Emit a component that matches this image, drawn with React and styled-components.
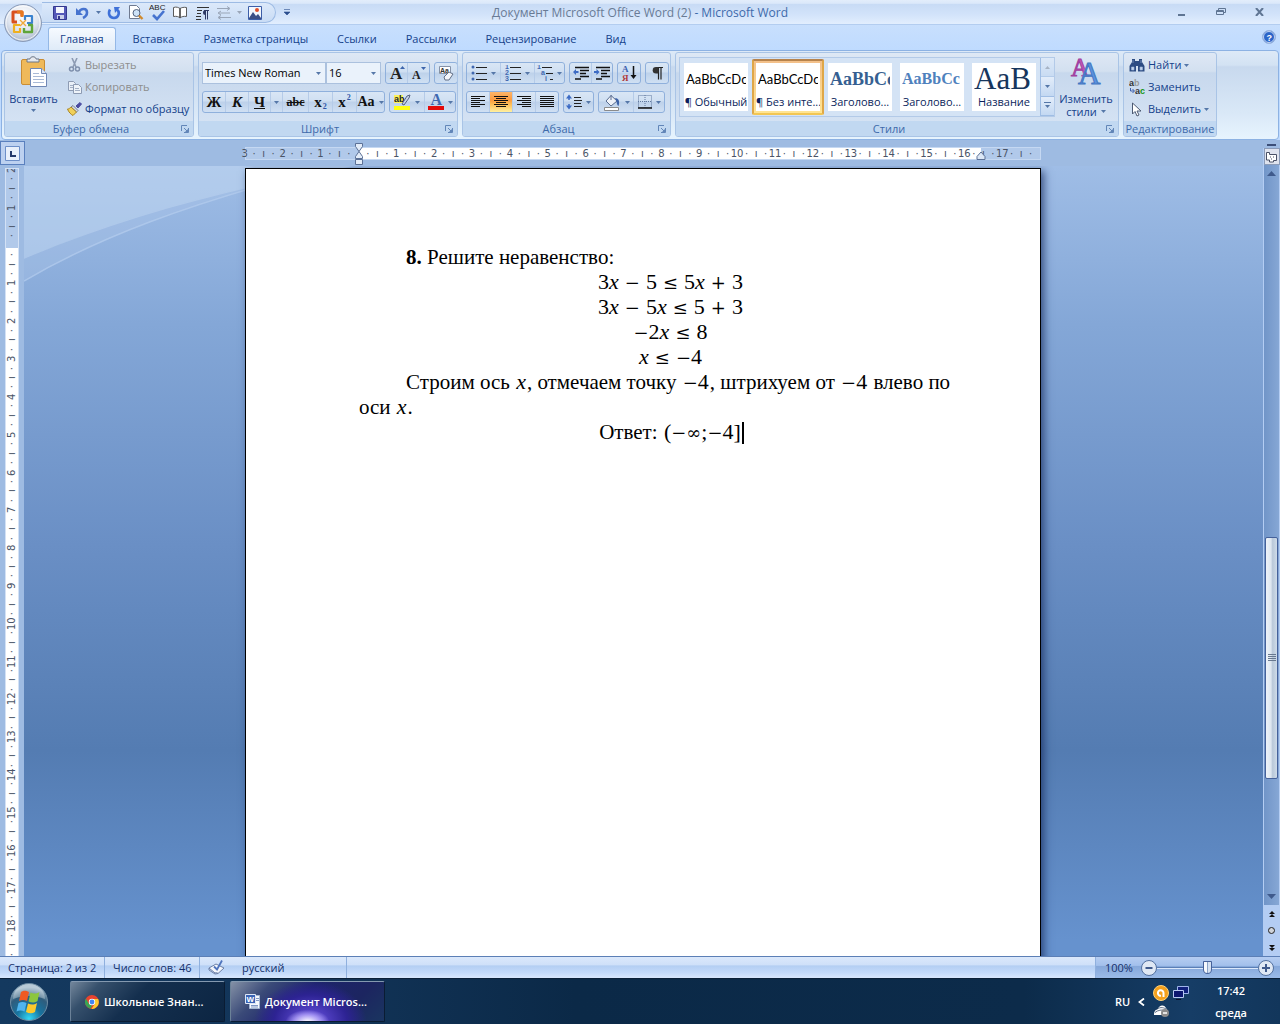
import React from 'react'
import styled, { createGlobalStyle, css } from 'styled-components'

const GlobalStyle = createGlobalStyle`
*{
    box-sizing:border-box;
}
body{
    margin:0;
    font-family:"Open Sans","Noto Sans",sans-serif;
    font-size:11px;
    line-height:16px;
    color:#15428b;
}
button,select,input{
    font:inherit;
    color:inherit;
    margin:0;
    padding:0;
    border:0;
    background:none;
}
svg{
    display:block;
    flex:none;
}
`

const Window = styled.div`
height:100vh;
display:flex;
flex-direction:column;
overflow:hidden;
background-color:#bfdbff;
`

/* title bar */
const TitleBar = styled.header`
height:25px;
display:grid;
grid-template-columns:1fr auto 1fr;
align-items:center;
position:relative;
background:linear-gradient(#e3edfb 0,#dbe8fa 14%,#c8dbf5 18%,#d2e3fa 60%,#e2eefe 100%);
border-bottom:1px solid #b3cdf0;
`
const Orb = styled.button`
position:absolute;
left:3px;
top:3px;
z-index:2;
`
const QuickAccess = styled.div`
display:flex;
align-items:center;
padding-top:1px;
`
const QuickPill = styled.div`
height:21px;
margin-left:42px;
padding:0 8px 0 7px;
display:flex;
align-items:center;
border:1px solid #9dbbe4;
border-left:0;
border-radius:0 11px 11px 0;
background:linear-gradient(#dce9fa,#c9dcf5);
`
const QuickButton = styled.button`
width:${(props) => props.$w || 22}px;
height:19px;
display:flex;
align-items:center;
justify-content:center;
`
const Title = styled.h1`
margin:0;
padding-top:2px;
font-size:12px;
font-weight:400;
color:#3e6aaa;
white-space:pre;
`
const DocName = styled.span`
color:#697b95;
`
const WindowButtons = styled.div`
display:flex;
justify-content:flex-end;
padding-right:1px;
`
const WindowButton = styled.button`
width:39px;
height:22px;
display:flex;
align-items:center;
justify-content:center;
`

/* tabs */
const TabRow = styled.nav`
height:25px;
display:flex;
align-items:flex-end;
gap:5px;
padding:0 4px 0 48px;
background:linear-gradient(#c8dffd,#bfdbff);
`
const Tab = styled.button`
height:23px;
padding:0 12px;
border-radius:3px 3px 0 0;
${(props) => props.$active && css`
    border:1px solid #94b8e6;
    border-bottom:0;
    padding:0 11px;
    background:linear-gradient(#f6faff,#dfebf8);
`}
`
const Help = styled.button`
margin:0 0 6px auto;
`

/* ribbon */
const Ribbon = styled.section`
height:90px;
display:flex;
gap:4px;
padding:1px 2px 3px;
margin:0 1px;
border:1px solid #8db2e3;
border-radius:4px;
background:linear-gradient(#dde9f7 0,#d3e2f3 16%,#c8d9ee 18%,#d9e8f7 70%,#e7f4fe 100%);
`
const GroupBox = styled.div`
width:${(props) => props.$w}px;
height:85px;
flex:none;
display:flex;
flex-direction:column;
border:1px solid #a9c4e6;
border-radius:3px;
background:linear-gradient(#dee8f5 0,#d3e0f0 22%,#c7d8ed 24%,#d8e5f5 100%);
overflow:hidden;
`
const GroupBody = styled.div`
flex:1;
display:flex;
`
const GroupLabel = styled.div`
height:15px;
display:flex;
align-items:center;
background-color:#c1d8f1;
color:#3e6aaa;
line-height:15px;
`
const LabelText = styled.span`
flex:1;
text-align:center;
white-space:nowrap;
`
const Launcher = styled.button`
width:16px;
height:15px;
display:flex;
align-items:center;
justify-content:center;
`
const BigButton = styled.button`
width:${(props) => props.$w}px;
display:flex;
flex-direction:column;
align-items:center;
padding-top:3px;
line-height:13px;
white-space:nowrap;
`
const BigText = styled.span`
display:flex;
align-items:center;
gap:4px;
margin-top:${(props) => props.$top || 0}px;
`
const SmallList = styled.div`
display:flex;
flex-direction:column;
padding:1px 0 0 5px;
`
const SmallButton = styled.button`
height:22px;
display:flex;
align-items:center;
gap:3px;
white-space:nowrap;
color:${(props) => (props.$off ? '#8d8d8d' : '#15428b')};
`
const Rows = styled.div`
display:flex;
flex-direction:column;
gap:7px;
padding:9px 3px 0;
`
const Row = styled.div`
display:flex;
gap:4px;
`
const Combo = styled.label`
width:${(props) => props.$w}px;
height:22px;
display:flex;
align-items:center;
padding-right:4px;
margin-right:${(props) => (props.$joined ? -4 : 0)}px;
border:1px solid #abc1de;
background-color:#eaf2fb;
`
const ComboSelect = styled.select`
flex:1;
min-width:0;
height:20px;
padding-left:2px;
appearance:none;
color:#000;
outline:0;
`
const Cluster = styled.div`
height:22px;
display:flex;
border:1px solid #8fb0dc;
border-radius:3px;
background:linear-gradient(#d9e6f5 0,#cfdff2 45%,#bdd1ea 50%,#d0e0f3 100%);
overflow:hidden;
`
const Tool = styled.button`
width:${(props) => props.$w || 22}px;
height:20px;
display:flex;
align-items:center;
justify-content:center;
gap:4px;
font-family:"Liberation Serif",serif;
font-weight:700;
font-size:${(props) => props.$size || 15}px;
font-style:${(props) => (props.$italic ? 'italic' : 'normal')};
text-decoration:${(props) => props.$line || 'none'};
color:#111;

& + &{
    border-left:1px solid #b5cbe8;
}
${(props) => props.$active && css`
    background:linear-gradient(#fdb569 0,#fb9b3f 40%,#fdbc55 60%,#fff0a0 100%);
`}
`
const Index = styled.span`
align-self:${(props) => (props.$sub ? 'flex-end' : 'flex-start')};
margin-left:-3px;
font-size:8px;
line-height:11px;
color:#2f56a8;
`
const Gallery = styled.div`
display:flex;
height:60px;
margin:4px 0 0 3px;
border:1px solid #b3cae8;
background-color:#d4e3f5;
`
const StyleCard = styled.button`
width:72px;
height:56px;
margin-top:1px;
padding:3px;
border:1px solid transparent;
border-radius:2px;
${(props) => props.$active && css`
    border:2px solid #c2935a;
    border-color:#b7834c #dfa748 #f2c654;
    padding:2px;
    background:linear-gradient(#f3c08a,#ffe593);
`}
`
const CardFace = styled.span`
height:48px;
display:flex;
flex-direction:column;
background-color:#fff;
overflow:hidden;
color:#0b1f5c;
`
const Sample = styled.span`
height:31px;
margin:0 2px;
display:flex;
align-items:center;
font-family:${(props) => props.$font || '"Lato",sans-serif'};
font-size:${(props) => props.$size || 13}px;
font-weight:${(props) => props.$weight || 400};
color:${(props) => props.$color || '#000'};
white-space:nowrap;
overflow:hidden;
`
const CardName = styled.span`
text-align:center;
line-height:16px;
white-space:nowrap;
`
const GalleryScroll = styled.div`
width:14px;
display:flex;
flex-direction:column;
border-left:1px solid #9fbde4;
`
const GalleryArrow = styled.button`
flex:1;
display:flex;
align-items:center;
justify-content:center;
border-bottom:1px solid #9fbde4;
background:linear-gradient(#e3edfa,#c3d8f2);
opacity:${(props) => (props.$off ? 0.6 : 1)};
`

/* workspace */
const Workspace = styled.main`
flex:1;
min-height:0;
display:flex;
`
const Desk = styled.div`
flex:1;
min-width:0;
display:flex;
flex-direction:column;
`
const RulerRow = styled.div`
height:26px;
flex:none;
display:flex;
background-color:#9ebbe2;
`
const TabSelector = styled.button`
width:25px;
height:24px;
margin-top:1px;
border:1px solid #5a80be;
background-color:#bdd1f0;
display:flex;
align-items:center;
justify-content:center;
`
const RulerArea = styled.div`
flex:1;
display:flex;
justify-content:center;
padding-right:2px;
`
const HRuler = styled.div`
position:relative;
width:796px;
height:13px;
margin-top:7px;
border:1px solid #c5d8f2;
background:linear-gradient(90deg,#b1c9ea 14.2%,#fff 14.2%,#fff 92.6%,#b1c9ea 92.6%);
`
const HMarks = styled.div`
display:flex;
margin:0 5px 0 -6px;
height:11px;
`
const Mark = styled.span`
flex:1 1 0;
min-width:0;
min-height:0;
display:flex;
align-items:center;
justify-content:center;
font-family:"DejaVu Sans",sans-serif;
font-size:10px;
line-height:10px;
color:#4a5467;
transform:${(props) => (props.$turn ? 'rotate(-90deg)' : 'none')};
`
const Marker = styled.svg`
position:absolute;
left:${(props) => props.$at}%;
top:${(props) => props.$top}px;
margin-left:-5px;
`
const Body = styled.div`
flex:1;
min-height:0;
display:flex;
`
const VRulerColumn = styled.div`
width:24px;
flex:none;
padding:2px 5px 0;
background-color:#9ebbe2;
overflow:hidden;
`
const VRuler = styled.div`
height:794px;
border:solid #d3e1f5;
border-width:1px 1px 0;
background:linear-gradient(#b1c9ea 79px,#fff 79px);
overflow:hidden;
`
const VMarks = styled.div`
height:794px;
margin-top:-4px;
display:flex;
flex-direction:column;
`
const Canvas = styled.div`
flex:1;
position:relative;
display:flex;
justify-content:center;
padding:2px 1px 0 0;
background:linear-gradient(#9fbde6 0,#84a7d7 20%,#6a8fc5 48%,#547cb2 74%,#6692ce 98%);
overflow:hidden;
`
const Swoosh = styled.svg`
position:absolute;
left:0;
top:0;
`
const Page = styled.article`
position:relative;
width:796px;
height:1123px;
padding:76px 58px 0 113px;
border:1px solid #000;
background-color:#fff;
box-shadow:3px 3px 8px rgba(20,40,90,0.7);
color:#000;
font-family:"Liberation Serif",serif;
font-size:21px;
line-height:25px;
`
const Paragraph = styled.p`
margin:0;
height:${(props) => (props.$center ? '25px' : 'auto')};
text-indent:${(props) => (props.$center ? 0 : 47)}px;
text-align:${(props) => (props.$center ? 'center' : 'left')};
`
const Formula = styled.span`
margin:0 1px;
font-size:22px;
line-height:20px;
white-space:nowrap;
`
const Sign = styled.span`
margin:0 ${(props) => (props.$tight ? 0 : 6)}px;
font-family:"DejaVu Serif",serif;
font-size:18px;
`
const Caret = styled.span`
display:inline-block;
width:2px;
height:22px;
margin-right:-2px;
vertical-align:-5px;
background-color:#000;
`

/* scroll bar */
const ScrollColumn = styled.div`
width:17px;
flex:none;
display:flex;
flex-direction:column;
align-items:center;
background-color:#b4cdf3;
`
const SplitBar = styled.div`
width:100%;
height:8px;
padding:4px 4px 2px;
background-color:#9ebbe2;
`
const SplitHandle = styled.div`
height:2px;
background-color:#3c4f78;
`
const RulerToggle = styled.button`
width:16px;
height:17px;
border:1px solid #8c9cb8;
background-color:#dfe3ee;
display:flex;
align-items:center;
justify-content:center;
`
const Track = styled.div`
flex:1;
width:15px;
display:flex;
flex-direction:column;
background:linear-gradient(90deg,#7195c8,#86a7d5);
`
const ScrollButton = styled.button`
height:16px;
display:flex;
align-items:center;
justify-content:center;
`
const Space = styled.div`
flex:${(props) => props.$grow};
`
const Thumb = styled.div`
flex:241;
display:flex;
align-items:center;
justify-content:center;
margin:0 1px;
border:1px solid #45619a;
border-radius:2px;
background:linear-gradient(90deg,#eef3f9 0,#dde6f0 45%,#b9c8d9 60%,#cfdce9 100%);
`
const Browse = styled.div`
height:51px;
display:flex;
flex-direction:column;
`
const BrowseButton = styled.button`
width:15px;
height:17px;
display:flex;
align-items:center;
justify-content:center;
`

/* status bar */
const StatusBar = styled.footer`
height:22px;
flex:none;
display:flex;
border-top:1px solid #5c7fb6;
background:linear-gradient(#dbe8fb 0,#cfe0f9 38%,#b3cef3 42%,#c3dafa 75%,#d8e7fd 100%);
color:#15306b;
`
const StatusItem = styled.div`
width:${(props) => props.$w}px;
padding-left:8px;
display:flex;
align-items:center;
gap:16px;
border-right:1px solid #8fb0de;
`
const Zoom = styled.div`
width:185px;
margin-left:auto;
padding:0 6px 0 9px;
display:flex;
align-items:center;
border-left:1px solid #8fb0de;
background:linear-gradient(#b5cdf1 0,#a3c0ec 40%,#86a8da 45%,#9bbbe8 100%);
`
const ZoomValue = styled.button`
width:36px;
text-align:left;
`
const ZoomRange = styled.input`
flex:1;
min-width:0;
height:16px;
appearance:none;
background:linear-gradient(transparent 7px,#5b7fb6 7px,#5b7fb6 8px,#dbe8fb 8px,#dbe8fb 9px,transparent 9px);

&::-webkit-slider-thumb{
    appearance:none;
    width:9px;
    height:13px;
    border:1px solid #45619a;
    border-radius:1px 1px 5px 5px;
    background:linear-gradient(90deg,#f6f9fd 3px,#8ba4c8 3px,#8ba4c8 4px,#d5e1f1 4px);
}
`

/* taskbar */
const Taskbar = styled.footer`
height:46px;
flex:none;
display:flex;
align-items:center;
background:linear-gradient(90deg,#14395f 0,#123458 25%,#0b2947 45%,#0c2b4a 80%,#163d66 93%,#12365b 100%);
border-top:1px solid #0a2038;
color:#fff;
font-weight:600;
`
const Start = styled.button`
margin-left:9px;
`
const TaskButton = styled.button`
width:155px;
height:41px;
margin-left:${(props) => props.$gap}px;
padding-left:14px;
display:flex;
align-items:center;
gap:5px;
white-space:nowrap;
border:1px solid #0a1c33;
border-top-color:#8499b0;
border-left-color:#6b8198;
border-radius:2px;
background:linear-gradient(135deg,#73869b 0,#36506c 16%,#142f4e 42%,#0c2542 100%);
${(props) => props.$active && css`
    background:radial-gradient(ellipse 22px 12px at 50% 102%,#fff,rgba(190,175,255,0.7) 60%,transparent),
        radial-gradient(ellipse 56px 40px at 52% 100%,#6c55e6,#2d2393 65%,transparent),
        linear-gradient(135deg,#8491a6 0,#3a4a78 22%,#1d246b 45%,#1c2560 75%,#1a3560 100%);
`}
`
const Tray = styled.div`
margin-left:auto;
display:flex;
align-items:center;
gap:8px;
padding-right:33px;
`
const TrayIcons = styled.div`
display:grid;
grid-template-columns:17px 17px;
gap:2px;
margin:0 18px 2px 0;
`
const Clock = styled.time`
display:flex;
flex-direction:column;
align-items:center;
gap:6px;
`

const Arrow = ({ up, color = '#5577a8' }) => (
    <svg width="5" height="3" viewBox="0 0 5 3">
        <path d={up ? 'M0 3h5L2.5 0z' : 'M0 0h5L2.5 3z'} fill={color} />
    </svg>
)

const Lines = ({ short }) => (
    <svg width="16" height="14" viewBox="0 0 16 14">
        {[1, 3, 5, 7, 9, 11].map((y, i) => (
            <path key={y} d={`M${i % 2 ? short[0] : 1} ${y}.5H${i % 2 ? short[1] : 15}`} stroke="#111" />
        ))}
    </svg>
)

const OrbIcon = () => (
    <svg width="40" height="40" viewBox="0 0 40 40">
        <defs>
            <radialGradient id="orb" cx="50%" cy="30%" r="70%">
                <stop offset="0" stopColor="#fff" />
                <stop offset="0.6" stopColor="#dfe5ef" />
                <stop offset="1" stopColor="#a9b6cc" />
            </radialGradient>
        </defs>
        <circle cx="20" cy="20" r="18.5" fill="url(#orb)" stroke="#8a9bb8" />
        <circle cx="20" cy="20" r="17" fill="none" stroke="#fff" strokeOpacity="0.8" />
        <g fill="none" strokeLinejoin="round">
            <path d="M14 19h-4V9h9v4" stroke="#d9501e" strokeWidth="3" />
            <path d="M14 9h5v5" stroke="#e8791f" strokeWidth="3" />
            <path d="M22 17v-4h7v7h-5" stroke="#3b83cf" strokeWidth="2.2" />
            <path d="M17 22h-6v7h6v-4" stroke="#efb01f" strokeWidth="2.2" />
            <path d="M21 25v4h8v-7h-4" stroke="#5fa53a" strokeWidth="2.4" />
            <path d="M17 17l6 6M23 17l-6 6" stroke="#f0a83a" strokeWidth="1.4" />
        </g>
    </svg>
)

const SaveIcon = () => (
    <svg width="14" height="14" viewBox="0 0 14 14">
        <path d="M.5.5h13v13h-12l-1-1z" fill="#5458b8" stroke="#34388f" />
        <path d="M3 1h8v6H3z" fill="#f4f6fd" />
        <path d="M4 9h7v4H4z" fill="#c9cfea" />
        <path d="M5 10h2v3H5z" fill="#34388f" />
    </svg>
)
const UndoIcon = () => (
    <svg width="14" height="14" viewBox="0 0 14 14">
        <path d="M4 6c2-4 8-4 8 .5 0 3-2 4.5-4 5.5" fill="none" stroke="#4673cf" strokeWidth="2.6" />
        <path d="M1 2v7h7z" fill="#4673cf" />
    </svg>
)
const RedoIcon = () => (
    <svg width="14" height="14" viewBox="0 0 14 14">
        <path d="M3 3.5C1 7 2 12 7 12s6-6 3-8.500" fill="none" stroke="#3f71d8" strokeWidth="2.6" />
        <path d="M7 1h6L8 7z" fill="#3f71d8" />
    </svg>
)
const PreviewIcon = () => (
    <svg width="16" height="15" viewBox="0 0 16 15">
        <path d="M1.5.5h7l3 3v10h-10z" fill="#fff" stroke="#6f7a90" />
        <circle cx="8.5" cy="8" r="3.5" fill="#cfe3f7" stroke="#566580" />
        <path d="M11 10.500l3.5 3.5" stroke="#d08a2d" strokeWidth="2.4" />
    </svg>
)
const SpellIcon = () => (
    <svg width="18" height="18" viewBox="0 0 18 18">
        <text x="0" y="6" fontSize="8" fontFamily="Liberation Sans" fill="#222">ABC</text>
        <path d="M4 11l4 4 7-8" fill="none" stroke="#4673cf" strokeWidth="2.6" />
    </svg>
)
const BookIcon = () => (
    <svg width="16" height="13" viewBox="0 0 16 13">
        <path d="M1.5 1.5c3-1 5 0 6.5 1 1.5-1 4-1.500 6.5-1v9c-2.500-.5-5 0-6.5 1.5-1.500-1.500-3.500-2-6.5-1.500z" fill="#fff" stroke="#5a5a5a" />
        <path d="M8 2.5v9" stroke="#333" strokeWidth="1.5" />
    </svg>
)
const ParaMarksIcon = () => (
    <svg width="15" height="14" viewBox="0 0 15 14">
        <path d="M2 1.5h12M2 4.5h5M2 7.5h4M1 10.5h5M1 13.5h5" stroke="#333" />
        <path d="M9 4.5h5M10.5 4.5v9M12.5 4.5v9" stroke="#2f3a66" />
        <path d="M10.5 4a2.5 2.5 0 000 5z" fill="#2f3a66" />
    </svg>
)
const ArrowsIcon = () => (
    <svg width="16" height="14" viewBox="0 0 16 14">
        <path d="M1 2.5h12M3 7h11M3 11.5h12M11 .5l3 2-3 2M5 5L2 7l3 2M5 9.5l-3 2 3 2" fill="none" stroke="#9aa6b8" />
    </svg>
)
const PictureIcon = () => (
    <svg width="14" height="14" viewBox="0 0 14 14">
        <path d="M.5.5h13v13H.5z" fill="#f3f7fd" stroke="#3d5ea8" />
        <path d="M1 12l4-6 3 4 2-2 3 4v1H1z" fill="#3b4f86" />
        <circle cx="9" cy="4" r="2" fill="#e0502c" />
    </svg>
)
const HelpIcon = () => (
    <svg width="14" height="14" viewBox="0 0 14 14">
        <circle cx="7" cy="7" r="6.5" fill="#2c66c9" stroke="#9db7de" />
        <circle cx="7" cy="7" r="5.5" fill="none" stroke="#fff" strokeOpacity="0.7" />
        <text x="4.5" y="10.5" fontSize="9" fontWeight="700" fontFamily="Liberation Sans" fill="#fff">?</text>
    </svg>
)
const LauncherIcon = () => (
    <svg width="8" height="8" viewBox="0 0 8 8">
        <path d="M.5 6V.5H6M3 3l3 3M7.5 3v4.5H3" fill="none" stroke="#6286b8" />
        <path d="M7 4v3H4z" fill="#6286b8" />
    </svg>
)
const PasteIcon = () => (
    <svg width="28" height="32" viewBox="0 0 28 32">
        <rect x="1.5" y="3.5" width="23" height="25" rx="1.5" fill="#efb95a" stroke="#c98d35" />
        <path d="M7 6V3h3c0-3 6-3 6 0h3v3z" fill="#e6e9ee" stroke="#6d7686" />
        <path d="M10.5 12.5h11l5 5v13h-16z" fill="#fff" stroke="#7088b5" />
        <path d="M21.5 12.5v5h5" fill="#dbe5f5" stroke="#7088b5" />
        <path d="M13 17.5h6M13 20.5h11M13 23.5h11M13 26.5h11" stroke="#a9bad6" />
    </svg>
)
const CutIcon = () => (
    <svg width="15" height="14" viewBox="0 0 15 14">
        <path d="M5 0l4 9M10 0L6 9" stroke="#8d9bb3" strokeWidth="1.6" />
        <circle cx="4.5" cy="11" r="2" fill="none" stroke="#7f90ad" strokeWidth="1.5" />
        <circle cx="10.5" cy="11" r="2" fill="none" stroke="#7f90ad" strokeWidth="1.5" />
    </svg>
)
const CopyIcon = () => (
    <svg width="15" height="13" viewBox="0 0 15 13">
        <path d="M1.5.5h5l2 2v7h-7z" fill="#e9eff7" stroke="#8d9bb3" />
        <path d="M3 4.5h4M3 6.5h4" stroke="#a3b0c5" />
        <path d="M6.5 3.5h5l3 3v6h-8z" fill="#eef3f9" stroke="#8d9bb3" />
        <path d="M8 7.5h4M8 9.5h5" stroke="#a3b0c5" />
    </svg>
)
const BrushIcon = () => (
    <svg width="15" height="14" viewBox="0 0 15 14">
        <path d="M9 4l4-3.5 1.5 1.5L11 6z" fill="#4b4ba0" stroke="#4b4ba0" />
        <path d="M6 3.5l5 5-1.5 1.5L4 5z" fill="#d7dce6" stroke="#777f90" />
        <path d="M4 5l5.5 5L6 13.5c-2-1-4.5-3.5-5.5-6.5C2 7 3 6 4 5z" fill="#f0d05a" stroke="#a98525" />
    </svg>
)
const EraserIcon = () => (
    <svg width="18" height="18" viewBox="0 0 18 18">
        <path d="M2.5 2.5h11v7h-11z" fill="#fff" stroke="#8592a8" />
        <text x="3" y="8.5" fontSize="7" fontWeight="700" fontFamily="Liberation Sans" fill="#333">Aa</text>
        <path d="M7 13l5-5 4 2-4 6H8z" fill="#f3f5fa" stroke="#626f86" />
    </svg>
)
const HighlightIcon = () => (
    <svg width="17" height="18" viewBox="0 0 17 18">
        <path d="M0 2h9v8H0z" fill="#fbf35a" />
        <text x="0" y="9" fontSize="9" fontFamily="Liberation Sans" fill="#222">ab</text>
        <path d="M8 11l5-8 3-1-1 3-5 7z" fill="#c5d2ea" stroke="#55627f" />
        <path d="M0 13h16v4H0z" fill="#ffff14" />
    </svg>
)
const FontColorIcon = () => (
    <svg width="16" height="18" viewBox="0 0 16 18">
        <text x="2.5" y="12" fontSize="16" fontWeight="700" fontFamily="Liberation Serif" fill="#3f68b0">A</text>
        <path d="M0 13h16v4H0z" fill="#e30b0b" />
    </svg>
)
const SizeIcon = ({ small }) => (
    <svg width="18" height="20" viewBox="0 0 18 20">
        <text x="2" y="16" fontSize={small ? 12 : 17} fontWeight="700" fontFamily="Liberation Serif" fill="#222">A</text>
        <path d={small ? 'M11 4h5l-2.5 3z' : 'M12 6h5l-2.5-3z'} fill="#3d65ab" />
    </svg>
)
const ListIcon = ({ marks }) => (
    <svg width="16" height="16" viewBox="0 0 16 16">
        {[2, 8, 14].map((y, i) => (
            <g key={y}>
                {marks === 'dot'
                    ? <circle cx="2" cy={y} r="1.5" fill="#4168b0" />
                    : <text x={marks === 'multi' ? i * 4 : 0} y={y + 2} fontSize="7" fontWeight="700" fontFamily="Liberation Sans" fill="#4168b0">{marks === 'multi' ? '1ai'[i] : i + 1}</text>}
                <path d={`M${marks === 'multi' ? 5 + i * 4 : 5} ${y}.5h${marks === 'multi' ? 10 - i * 3 : 11}`} stroke="#222" />
            </g>
        ))}
    </svg>
)
const IndentIcon = ({ right }) => (
    <svg width="16" height="14" viewBox="0 0 16 14">
        <path d="M2 1.5h14M7 4.5h9M7 7.5h6M7 10.5h9M2 13h6" stroke="#111" strokeWidth="1.5" />
        <path d={right ? 'M5.5 6l-3-3v2H0v2h2.5v2z' : 'M0 6l3-3v2h2.5v2H3v2z'} fill="#3c6bc4" />
    </svg>
)
const SortIcon = () => (
    <svg width="16" height="18" viewBox="0 0 16 18">
        <text x="1" y="8" fontSize="9" fontWeight="700" fontFamily="Liberation Serif" fill="#3c5fae">А</text>
        <text x="1" y="17" fontSize="9" fontWeight="700" fontFamily="Liberation Serif" fill="#b03a3a">Я</text>
        <path d="M12.5 2v11" stroke="#111" strokeWidth="1.5" />
        <path d="M9.5 11h6l-3 4z" fill="#111" />
    </svg>
)
const PilcrowIcon = () => (
    <svg width="11" height="13" viewBox="0 0 11 13">
        <path d="M5 .5h6M6.5 1v11.5M9 1v11.5" stroke="#222" strokeWidth="1.2" />
        <path d="M6.5 0H4a3.3 3.3 0 000 6.6h2.5z" fill="#333" />
    </svg>
)
const SpacingIcon = () => (
    <svg width="16" height="16" viewBox="0 0 16 16">
        <path d="M3 2v4M3 10v4" stroke="#3c6bc4" strokeWidth="1.5" />
        <path d="M0 4.5l3-4 3 4zM0 11.5l3 4 3-4z" fill="#3c6bc4" />
        <path d="M8 3.5h7M8 6.5h8M8 9.5h7M8 12.5h8" stroke="#222" />
    </svg>
)
const BucketIcon = () => (
    <svg width="18" height="17" viewBox="0 0 18 17">
        <path d="M8 1.5L14 7l-6 5-5-5z" fill="#eef2f9" stroke="#586b8e" />
        <path d="M8 1v5" stroke="#586b8e" />
        <path d="M12 4c4 0 5 4 3.5 8-2-1-1.500-5-3.5-8z" fill="#3c62a8" />
        <path d="M1.5 13.5h14v3h-14z" fill="#fff" stroke="#8b8b8b" />
    </svg>
)
const BorderIcon = () => (
    <svg width="14" height="14" viewBox="0 0 14 14">
        <path d="M.5.5h13v12H.5zM7 0v13M0 6.5h14" fill="none" stroke="#60789f" strokeDasharray="1 1" />
        <path d="M0 13h14" stroke="#111" strokeWidth="1.6" />
    </svg>
)
const ChangeStylesIcon = () => (
    <svg width="32" height="30" viewBox="0 0 32 30">
        <text x="1" y="20" fontSize="25" fontWeight="400" fontFamily="Liberation Serif" fill="#c257b8" stroke="#a040a0">A</text>
        <text x="8" y="28" fontSize="31" fontWeight="400" fontFamily="Liberation Serif" fill="#5b93e0" stroke="#4477c2">A</text>
    </svg>
)
const FindIcon = () => (
    <svg width="16" height="14" viewBox="0 0 16 14">
        <path d="M3 1h3v2h4V1h3v3l2.5 4v5.5H9V8H7v5.5H.5V8L3 4z" fill="#2d4c83" />
        <path d="M2.5 9H5v3H2.500zM11 9h2.5v3H11zM4 2v3M12 2v3" fill="#c3d3ec" stroke="#9db5d9" strokeWidth="0.6" />
    </svg>
)
const ReplaceIcon = () => (
    <svg width="16" height="16" viewBox="0 0 16 16">
        <text x="0" y="7" fontSize="9" fontWeight="700" fontFamily="Liberation Sans" fill="#333">a<tspan fill="#9a9a9a">b</tspan></text>
        <text x="6" y="15" fontSize="9" fontWeight="700" fontFamily="Liberation Sans" fill="#333">a<tspan fill="#149514">c</tspan></text>
        <path d="M1.5 9v3H5M3.5 10l2 2-2 2" fill="none" stroke="#3c5fae" />
    </svg>
)
const SelectIcon = () => (
    <svg width="16" height="15" viewBox="0 0 16 15">
        <path d="M3.5 1v11L6 9.500 8 14l2-1-2-4h4z" fill="#fff" stroke="#4d5a73" />
    </svg>
)
const ProofIcon = () => (
    <svg width="18" height="15" viewBox="0 0 18 15">
        <path d="M1 8l7-4 8 4-6 5.5c-1-1-2-1-3-.5z" fill="#f2f5fb" stroke="#6c7fa5" />
        <path d="M1 8v2l6 4 3-.5" fill="none" stroke="#6c7fa5" />
        <path d="M6 6.5l3 3 5-9" fill="none" stroke="#4f74bd" strokeWidth="1.8" />
    </svg>
)
const StartIcon = () => (
    <svg width="40" height="40" viewBox="0 0 40 40">
        <defs>
            <radialGradient id="start" cx="50%" cy="95%" r="85%">
                <stop offset="0" stopColor="#35d8f5" />
                <stop offset="0.4" stopColor="#17739f" />
                <stop offset="0.75" stopColor="#2f5c7c" />
                <stop offset="1" stopColor="#9ab4c6" />
            </radialGradient>
        </defs>
        <circle cx="20" cy="20" r="18.5" fill="url(#start)" stroke="#6d8ca3" />
        <path d="M4 17a16 15 0 0132 0c-10-4-22-4-32 0z" fill="#fff" opacity="0.3" />
        <path d="M12 10c3-2 5-1.500 8 0l-2 9c-3-1.500-5-1.500-8 0z" fill="#ef5a24" />
        <path d="M21.5 10.5c3 1.5 5.5 1.5 9-.5l-2 9c-3 2-6 2-9 .5z" fill="#8cc63e" />
        <path d="M9.5 21c3-1.500 5-1.500 8 0l-2 8.5c-3-1.500-5-1.500-8 0z" fill="#4fb4ee" />
        <path d="M19 21.5c3 1.5 6 1.5 9-.5l-2 9c-3 2-6 1.5-9 0z" fill="#fbc92d" />
    </svg>
)
const ChromeIcon = () => (
    <svg width="14" height="14" viewBox="0 0 14 14">
        <circle cx="7" cy="7" r="7" fill="#e8432e" />
        <path d="M.9 3.5L4 9l3 1.5-1.500 3.300A7 7 0 01.9 3.5z" fill="#37a655" />
        <path d="M13.1 4H7l3 4.500L6.500 14A7 7 0 0013.1 4z" fill="#fccb2f" />
        <circle cx="7" cy="7" r="3.2" fill="#fff" />
        <circle cx="7" cy="7" r="2.4" fill="#4285f4" />
    </svg>
)
const WordIcon = () => (
    <svg width="15" height="15" viewBox="0 0 15 15">
        <path d="M4.5 1.5h10v13h-10z" fill="#f5f8fd" stroke="#a4b5d2" />
        <path d="M11 4.5h3M11 6.5h3M6 11.5h7M6 13h7" stroke="#7f97c4" />
        <path d="M.5.5h10v9H.5z" fill="#3a63b5" stroke="#dce6f7" />
        <text x="1.5" y="8" fontSize="8" fontWeight="700" fontFamily="Liberation Sans" fill="#fff">W</text>
    </svg>
)
const AvastIcon = () => (
    <svg width="17" height="16" viewBox="0 0 17 16">
        <circle cx="8" cy="8" r="7.5" fill="#f5a11d" stroke="#ffd27a" />
        <path d="M10.5 12V8A2.8 2.8 0 108 10.8" fill="none" stroke="#fff" strokeWidth="2" />
    </svg>
)
const NetworkIcon = () => (
    <svg width="17" height="16" viewBox="0 0 17 16">
        <path d="M5.5 1.5h11v7h-11z" fill="#10207c" stroke="#9fb4ea" />
        <path d="M1.5 5.5h10v7h-10z" fill="#0c1670" stroke="#b9c9f2" />
        <path d="M4 14.5h5" stroke="#0b0f2b" />
    </svg>
)
const TrayCloudIcon = () => (
    <svg width="17" height="14" viewBox="0 0 17 14">
        <path d="M1 11c0-3 2-5 4-5 1-4 6-5 8-1l2 4-3 3H1z" fill="#fff" />
        <path d="M3 7c3-3 7-3 10-1M2 9.5c3-2.500 7-3 10-2" fill="none" stroke="#33496a" strokeWidth="0.8" />
        <circle cx="12" cy="10" r="4" fill="#8b8b8b" />
        <path d="M10 10h4" stroke="#fff" strokeWidth="1.5" />
    </svg>
)

const quickButtons = [
    { label: 'Сохранить', icon: <SaveIcon /> },
    { label: 'Отменить', icon: <UndoIcon /> },
    { label: 'Варианты отмены', icon: <Arrow />, w: 10 },
    { label: 'Повторить', icon: <RedoIcon /> },
    { label: 'Просмотр', icon: <PreviewIcon /> },
    { label: 'Правописание', icon: <SpellIcon /> },
    { label: 'Справочник', icon: <BookIcon /> },
    { label: 'Знаки абзаца', icon: <ParaMarksIcon /> },
    { label: 'Интервал', icon: <ArrowsIcon /> },
    { label: 'Варианты интервала', icon: <Arrow color="#9aa6b8" />, w: 8 },
    { label: 'Рисунок', icon: <PictureIcon />, w: 24 },
]

const tabs = ['Главная', 'Вставка', 'Разметка страницы', 'Ссылки', 'Рассылки', 'Рецензирование', 'Вид']

const cambria = '"Liberation Serif",serif'
const styles = [
    { name: '¶ Обычный', text: 'AaBbCcDс' },
    { name: '¶ Без инте...', text: 'AaBbCcDс', active: true },
    { name: 'Заголово...', text: 'AaBbCс', font: cambria, size: 18, weight: 700, color: '#365f91' },
    { name: 'Заголово...', text: 'AaBbCc', font: cambria, size: 16, weight: 700, color: '#4f81bd' },
    { name: 'Название', text: 'AaB', font: cambria, size: 31, color: '#17365d' },
]

// four marks per centimetre, the number stands on the whole one
const rulerMarks = (zero, count) => Array.from({ length: count * 4 }, (_, i) => {
    if (i % 4 === 2) return 'ı'
    if (i % 4) return '·'
    return Math.abs(i / 4 - zero) || ''
})

const Group = ({ label, w, launcher, children }) => (
    <GroupBox $w={w}>
        <GroupBody>{children}</GroupBody>
        <GroupLabel>
            <LabelText>{label}</LabelText>
            {launcher && <Launcher aria-label={label + ': параметры'}><LauncherIcon /></Launcher>}
        </GroupLabel>
    </GroupBox>
)

const X = () => <i>x</i>
const Minus = () => <Sign $tight>−</Sign>

const Header = () => (
    <>
        <TitleBar>
            <Orb aria-label="Кнопка Office"><OrbIcon /></Orb>
            <QuickAccess>
                <QuickPill>
                    {quickButtons.map((b) => (
                        <QuickButton key={b.label} aria-label={b.label} $w={b.w}>{b.icon}</QuickButton>
                    ))}
                </QuickPill>
                <QuickButton aria-label="Настройка панели">
                    <svg width="6" height="7" viewBox="0 0 6 7"><path d="M0 .5h6M0 3h6L3 6z" fill="#2c4f8f" stroke="#2c4f8f" strokeWidth="0.6" /></svg>
                </QuickButton>
            </QuickAccess>
            <Title><DocName>Документ Microsoft Office Word (2)</DocName> - Microsoft Word</Title>
            <WindowButtons>
                <WindowButton aria-label="Свернуть">
                    <svg width="8" height="10" viewBox="0 0 8 10"><path d="M0 8h7" stroke="#5f7593" strokeWidth="2" /></svg>
                </WindowButton>
                <WindowButton aria-label="Восстановить">
                    <svg width="10" height="8" viewBox="0 0 10 8"><path d="M2.5 2V.5h7v4H8M.5 2.5h7v4h-7zM1 3.5h6" fill="none" stroke="#5f7593" /></svg>
                </WindowButton>
                <WindowButton aria-label="Закрыть">
                    <svg width="9" height="8" viewBox="0 0 9 8"><path d="M1 0l7 8M8 0L1 8" stroke="#5f7593" strokeWidth="2" /></svg>
                </WindowButton>
            </WindowButtons>
        </TitleBar>
        <TabRow>
            {tabs.map((tab, i) => <Tab key={tab} $active={i === 0}>{tab}</Tab>)}
            <Help aria-label="Справка"><HelpIcon /></Help>
        </TabRow>
    </>
)

const Tools = () => (
    <Ribbon>
        <Group label="Буфер обмена" w={190} launcher>
            <BigButton $w={57}>
                <PasteIcon />
                <BigText $top={4}>Вставить</BigText>
                <BigText $top={4}><Arrow /></BigText>
            </BigButton>
            <SmallList>
                <SmallButton $off><CutIcon />Вырезать</SmallButton>
                <SmallButton $off><CopyIcon />Копировать</SmallButton>
                <SmallButton><BrushIcon />Формат по образцу</SmallButton>
            </SmallList>
        </Group>
        <Group label="Шрифт" w={260} launcher>
            <Rows>
                <Row>
                    <Combo $w={124} $joined>
                        <ComboSelect aria-label="Шрифт"><option>Times New Roman</option></ComboSelect>
                        <Arrow />
                    </Combo>
                    <Combo $w={55}>
                        <ComboSelect aria-label="Размер шрифта"><option>16</option></ComboSelect>
                        <Arrow />
                    </Combo>
                    <Cluster>
                        <Tool $w={21} aria-label="Увеличить размер"><SizeIcon /></Tool>
                        <Tool aria-label="Уменьшить размер"><SizeIcon small /></Tool>
                    </Cluster>
                    <Cluster><Tool aria-label="Очистить формат"><EraserIcon /></Tool></Cluster>
                </Row>
                <Row>
                    <Cluster>
                        <Tool>Ж</Tool>
                        <Tool $w={23} $italic>К</Tool>
                        <Tool $line="underline">Ч</Tool>
                        <Tool $w={12} aria-label="Вид подчёркивания"><Arrow /></Tool>
                        <Tool $w={26} $size={12} $line="line-through">abc</Tool>
                        <Tool $w={24}>x<Index $sub>2</Index></Tool>
                        <Tool $w={24}>x<Index>2</Index></Tool>
                        <Tool $w={28} $size={14}>Aa<Arrow /></Tool>
                    </Cluster>
                    <Cluster>
                        <Tool $w={34} aria-label="Цвет выделения"><HighlightIcon /><Arrow /></Tool>
                        <Tool $w={31} aria-label="Цвет текста"><FontColorIcon /><Arrow /></Tool>
                    </Cluster>
                </Row>
            </Rows>
        </Group>
        <Group label="Абзац" w={209} launcher>
            <Rows>
                <Row>
                    <Cluster>
                        <Tool $w={33} aria-label="Маркеры"><ListIcon marks="dot" /><Arrow /></Tool>
                        <Tool $w={34} aria-label="Нумерация"><ListIcon marks="num" /><Arrow /></Tool>
                        <Tool $w={30} aria-label="Многоуровневый список"><ListIcon marks="multi" /><Arrow /></Tool>
                    </Cluster>
                    <Cluster>
                        <Tool $w={21} aria-label="Уменьшить отступ"><IndentIcon /></Tool>
                        <Tool $w={21} aria-label="Увеличить отступ"><IndentIcon right /></Tool>
                    </Cluster>
                    <Cluster><Tool aria-label="Сортировка"><SortIcon /></Tool></Cluster>
                    <Cluster><Tool aria-label="Непечатаемые знаки"><PilcrowIcon /></Tool></Cluster>
                </Row>
                <Row>
                    <Cluster>
                        <Tool aria-label="По левому краю"><Lines short={[1, 10]} /></Tool>
                        <Tool $w={23} $active aria-label="По центру"><Lines short={[3, 13]} /></Tool>
                        <Tool $w={23} aria-label="По правому краю"><Lines short={[6, 15]} /></Tool>
                        <Tool $w={23} aria-label="По ширине"><Lines short={[1, 15]} /></Tool>
                    </Cluster>
                    <Cluster><Tool $w={29} aria-label="Междустрочный интервал"><SpacingIcon /><Arrow /></Tool></Cluster>
                    <Cluster>
                        <Tool $w={34} aria-label="Заливка"><BucketIcon /><Arrow /></Tool>
                        <Tool $w={31} aria-label="Границы"><BorderIcon /><Arrow /></Tool>
                    </Cluster>
                </Row>
            </Rows>
        </Group>
        <Group label="Стили" w={444} launcher>
            <Gallery>
                {styles.map((s, i) => (
                    <StyleCard key={i} $active={s.active}>
                        <CardFace>
                            <Sample $font={s.font} $size={s.size} $weight={s.weight} $color={s.color}>{s.text}</Sample>
                            <CardName>{s.name}</CardName>
                        </CardFace>
                    </StyleCard>
                ))}
                <GalleryScroll>
                    <GalleryArrow $off aria-label="Вверх"><Arrow up color="#8a94a5" /></GalleryArrow>
                    <GalleryArrow aria-label="Вниз"><Arrow /></GalleryArrow>
                    <GalleryArrow aria-label="Все стили">
                        <svg width="7" height="7" viewBox="0 0 7 7"><path d="M0 .5h7" stroke="#5577a8" /><path d="M1 3h5L3.5 6z" fill="#5577a8" /></svg>
                    </GalleryArrow>
                </GalleryScroll>
            </Gallery>
            <BigButton $w={62}>
                <ChangeStylesIcon />
                <BigText $top={6}>Изменить</BigText>
                <BigText>стили <Arrow /></BigText>
            </BigButton>
        </Group>
        <Group label="Редактирование" w={94}>
            <SmallList>
                <SmallButton><FindIcon />Найти <Arrow /></SmallButton>
                <SmallButton><ReplaceIcon />Заменить</SmallButton>
                <SmallButton><SelectIcon />Выделить <Arrow /></SmallButton>
            </SmallList>
        </Group>
    </Ribbon>
)

const Document = () => (
    <Page>
        <Paragraph><b>8.</b> Решите неравенство:</Paragraph>
        <Paragraph $center><Formula>3<X /><Sign>−</Sign>5<Sign>≤</Sign>5<X /><Sign>+</Sign>3</Formula></Paragraph>
        <Paragraph $center><Formula>3<X /><Sign>−</Sign>5<X /><Sign>≤</Sign>5<Sign>+</Sign>3</Formula></Paragraph>
        <Paragraph $center><Formula><Minus />2<X /><Sign>≤</Sign>8</Formula></Paragraph>
        <Paragraph $center><Formula><X /><Sign>≤</Sign><Minus />4</Formula></Paragraph>
        <Paragraph>
            Строим ось <Formula><X /></Formula>, отмечаем точку <Formula><Minus />4</Formula>, штрихуем
            от <Formula><Minus />4</Formula> влево по оси <Formula><X /></Formula>.
        </Paragraph>
        <Paragraph $center>Ответ: <Formula>(<Minus /><Sign $tight>∞</Sign>;<Minus />4]</Formula><Caret /></Paragraph>
    </Page>
)

const App = () => {
    return (
        <Window>
            <GlobalStyle />
            <Header />
            <Tools />
            <Workspace>
                <Desk>
                    <RulerRow>
                        <TabSelector aria-label="Табуляция">
                            <svg width="15" height="15" viewBox="0 0 15 15">
                                <path d="M.5.5h14v14H.5z" fill="#e9f0fb" stroke="#6d8fc8" />
                                <path d="M6 5v5h5" fill="none" stroke="#24396b" strokeWidth="2" />
                            </svg>
                        </TabSelector>
                        <RulerArea>
                            <HRuler>
                                <HMarks>
                                    {rulerMarks(3, 21).map((m, i) => <Mark key={i}>{m}</Mark>)}
                                </HMarks>
                                <Marker $at={14.2} $top={-5} width="10" height="23" viewBox="0 0 10 23">
                                    <path d="M1.5.5h7v3L5 8.500l-3.5-5zM5 8.500l3.5 5v2h-7v-2zM1.5 16.5h7v5h-7z" fill="#e3ecf8" stroke="#5c7196" />
                                </Marker>
                                <Marker $at={92.6} $top={3} width="10" height="10" viewBox="0 0 10 10">
                                    <path d="M5 1l4 4.5v3H1v-3z" fill="#dce7f6" stroke="#5c7196" />
                                </Marker>
                            </HRuler>
                        </RulerArea>
                    </RulerRow>
                    <Body>
                        <VRulerColumn>
                            <VRuler>
                                <VMarks>
                                    {rulerMarks(2, 21).map((m, i) => <Mark key={i} $turn>{m}</Mark>)}
                                </VMarks>
                            </VRuler>
                        </VRulerColumn>
                        <Canvas>
                            <Swoosh width="420" height="140" viewBox="0 0 420 140">
                                <path d="M0 0h330C210 22 100 50 0 93z" fill="#c3d9f2" opacity="0.55" />
                                <path d="M0 93C100 50 170 33 260 13 170 38 80 68 0 115z" fill="#b3cbec" opacity="0.3" />
                                <path d="M0 115C80 68 170 38 260 13" fill="none" stroke="#b5cdee" strokeWidth="1.5" opacity="0.7" />
                            </Swoosh>
                            <Document />
                        </Canvas>
                    </Body>
                </Desk>
                <ScrollColumn>
                    <SplitBar><SplitHandle /></SplitBar>
                    <RulerToggle aria-label="Линейка">
                        <svg width="13" height="12" viewBox="0 0 13 12"><path d="M1.5 1.5h3v2h7v6h-3V11h-4V9h-3zM5 6h1M8 6h1M6 8h1" fill="#fff" stroke="#4a5166" /></svg>
                    </RulerToggle>
                    <Track>
                        <ScrollButton aria-label="Прокрутить вверх">
                            <svg width="9" height="5" viewBox="0 0 9 5"><path d="M0 5h9L4.5 0z" fill="#3f5a8c" /></svg>
                        </ScrollButton>
                        <Space $grow={357} />
                        <Thumb>
                            <svg width="8" height="8" viewBox="0 0 8 8"><path d="M0 .5h8M0 2.5h8M0 4.5h8M0 6.5h8" stroke="#68788f" /></svg>
                        </Thumb>
                        <Space $grow={110} />
                        <ScrollButton aria-label="Прокрутить вниз">
                            <svg width="9" height="5" viewBox="0 0 9 5"><path d="M0 0h9L4.5 5z" fill="#3f5a8c" /></svg>
                        </ScrollButton>
                    </Track>
                    <Browse>
                        <BrowseButton aria-label="Предыдущая страница">
                            <svg width="6" height="6" viewBox="0 0 6 6"><path d="M0 3l3-3 3 3zM0 6l3-3 3 3z" fill="#111" /></svg>
                        </BrowseButton>
                        <BrowseButton aria-label="Объект перехода">
                            <svg width="7" height="7" viewBox="0 0 7 7"><circle cx="3.5" cy="3.5" r="3" fill="#d0d4da" stroke="#222" /></svg>
                        </BrowseButton>
                        <BrowseButton aria-label="Следующая страница">
                            <svg width="6" height="6" viewBox="0 0 6 6"><path d="M0 0l3 3 3-3zM0 3l3 3 3-3z" fill="#111" /></svg>
                        </BrowseButton>
                    </Browse>
                </ScrollColumn>
            </Workspace>
            <StatusBar>
                <StatusItem $w={105}>Страница: 2 из 2</StatusItem>
                <StatusItem $w={95}>Число слов: 46</StatusItem>
                <StatusItem $w={147}><ProofIcon />русский</StatusItem>
                <Zoom>
                    <ZoomValue>100%</ZoomValue>
                    <button aria-label="Уменьшить масштаб">
                        <svg width="16" height="16" viewBox="0 0 16 16"><circle cx="8" cy="8" r="7.5" fill="#dfe8f4" stroke="#52709f" /><path d="M4.5 8h7" stroke="#3f5a8c" strokeWidth="2" /></svg>
                    </button>
                    <ZoomRange type="range" min="0" max="200" defaultValue="100" aria-label="Масштаб" />
                    <button aria-label="Увеличить масштаб">
                        <svg width="16" height="16" viewBox="0 0 16 16"><circle cx="8" cy="8" r="7.5" fill="#dfe8f4" stroke="#52709f" /><path d="M4 8h8M8 4v8" stroke="#3f5a8c" strokeWidth="2" /></svg>
                    </button>
                </Zoom>
            </StatusBar>
            <Taskbar>
                <Start aria-label="Пуск"><StartIcon /></Start>
                <TaskButton $gap={21}><ChromeIcon />Школьные Знан...</TaskButton>
                <TaskButton $gap={5} $active><WordIcon />Документ Micros...</TaskButton>
                <Tray>
                    <span>RU</span>
                    <svg width="7" height="8" viewBox="0 0 7 8"><path d="M6 .5L1.5 4 6 7.5" fill="none" stroke="#fff" strokeWidth="1.8" /></svg>
                    <TrayIcons>
                        <AvastIcon />
                        <NetworkIcon />
                        <TrayCloudIcon />
                    </TrayIcons>
                    <Clock><span>17:42</span><span>среда</span></Clock>
                </Tray>
            </Taskbar>
        </Window>
    )
}

export default App
